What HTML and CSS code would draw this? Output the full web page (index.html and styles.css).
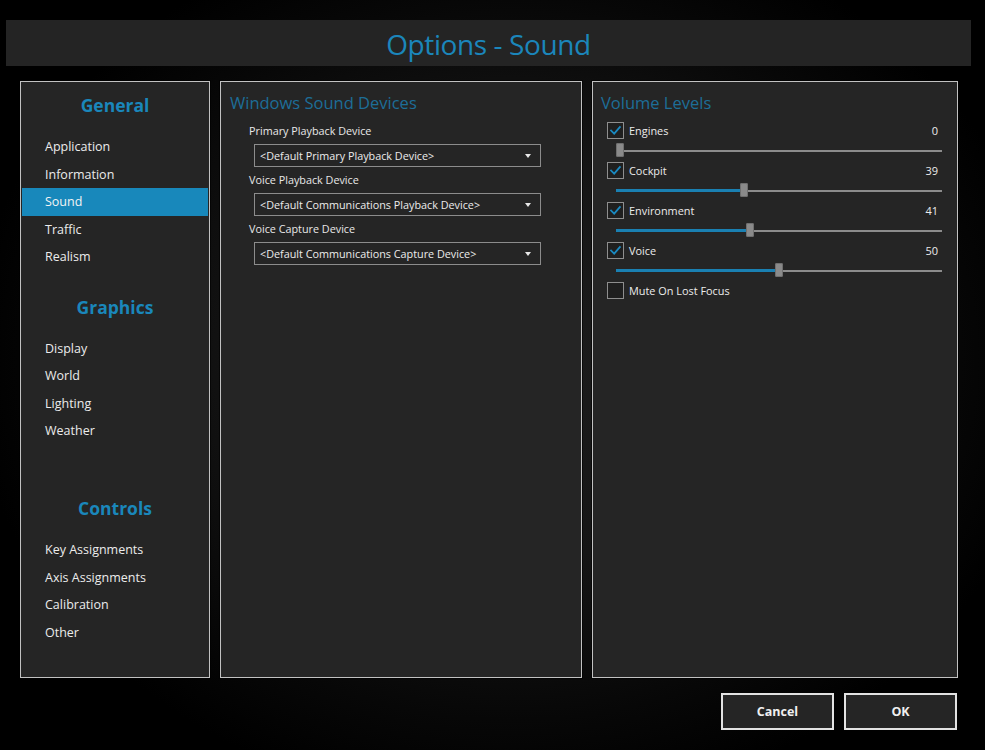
FILE: index.html
```html
<!DOCTYPE html>
<html lang="en">
<head>
<meta charset="utf-8">
<title>Options - Sound</title>
<link rel="stylesheet" href="styles.css">
</head>
<body>
<header class="title-bar"><h1>Options - Sound</h1></header>
<main class="panels">
  <nav class="panel nav-panel">
    <section class="nav-section">
      <h2>General</h2>
      <ul>
        <li>Application</li>
        <li>Information</li>
        <li class="active">Sound</li>
        <li>Traffic</li>
        <li>Realism</li>
      </ul>
    </section>
    <section class="nav-section">
      <h2>Graphics</h2>
      <ul>
        <li>Display</li>
        <li>World</li>
        <li>Lighting</li>
        <li>Weather</li>
      </ul>
    </section>
    <section class="nav-section controls">
      <h2>Controls</h2>
      <ul>
        <li>Key Assignments</li>
        <li>Axis Assignments</li>
        <li>Calibration</li>
        <li>Other</li>
      </ul>
    </section>
  </nav>

  <section class="panel devices-panel">
    <h3 class="panel-title">Windows Sound Devices</h3>
    <div class="field">
      <div class="field-label">Primary Playback Device</div>
      <div class="select"><span>&lt;Default Primary Playback Device&gt;</span><i class="arrow"></i></div>
    </div>
    <div class="field">
      <div class="field-label">Voice Playback Device</div>
      <div class="select"><span>&lt;Default Communications Playback Device&gt;</span><i class="arrow"></i></div>
    </div>
    <div class="field">
      <div class="field-label">Voice Capture Device</div>
      <div class="select"><span>&lt;Default Communications Capture Device&gt;</span><i class="arrow"></i></div>
    </div>
  </section>

  <section class="panel volume-panel">
    <h3 class="panel-title">Volume Levels</h3>
    <div class="levels">
      <div class="level">
        <div class="check-row">
          <span class="checkbox checked"><svg viewBox="0 0 17 17"><path d="M3.5 8.5 L7 12 L13.5 4.5"/></svg></span>
          <span class="check-label">Engines</span>
          <span class="value">0</span>
        </div>
        <div class="slider">
          <div class="fill" style="width:0px"></div><div class="rest"></div>
          <div class="thumb" style="left:0px"></div>
        </div>
      </div>
      <div class="level">
        <div class="check-row">
          <span class="checkbox checked"><svg viewBox="0 0 17 17"><path d="M3.5 8.5 L7 12 L13.5 4.5"/></svg></span>
          <span class="check-label">Cockpit</span>
          <span class="value">39</span>
        </div>
        <div class="slider">
          <div class="fill" style="width:128px"></div><div class="rest"></div>
          <div class="thumb" style="left:124px"></div>
        </div>
      </div>
      <div class="level">
        <div class="check-row">
          <span class="checkbox checked"><svg viewBox="0 0 17 17"><path d="M3.5 8.5 L7 12 L13.5 4.5"/></svg></span>
          <span class="check-label">Environment</span>
          <span class="value">41</span>
        </div>
        <div class="slider">
          <div class="fill" style="width:134px"></div><div class="rest"></div>
          <div class="thumb" style="left:130px"></div>
        </div>
      </div>
      <div class="level">
        <div class="check-row">
          <span class="checkbox checked"><svg viewBox="0 0 17 17"><path d="M3.5 8.5 L7 12 L13.5 4.5"/></svg></span>
          <span class="check-label">Voice</span>
          <span class="value">50</span>
        </div>
        <div class="slider">
          <div class="fill" style="width:163px"></div><div class="rest"></div>
          <div class="thumb" style="left:159px"></div>
        </div>
      </div>
      <div class="check-row">
        <span class="checkbox"></span>
        <span class="check-label">Mute On Lost Focus</span>
      </div>
    </div>
  </section>
</main>
<footer class="actions">
  <button class="btn">Cancel</button>
  <button class="btn">OK</button>
</footer>
</body>
</html>
```

FILE: styles.css
```css
html, body {
  margin: 0;
  padding: 0;
}

body {
  width: 985px;
  height: 750px;
  overflow: hidden;
  background:
    radial-gradient(ellipse 55% 60% at 52% 48%, #1d1d1d 0%, #151515 45%, #070707 80%, #000 100%);
  font-family: "Open Sans", "Noto Sans", sans-serif;
  color: #e6e6e6;
}

.title-bar {
  margin: 20px 14px 0 6px;
  height: 46px;
  background: #242424;
  display: flex;
  align-items: center;
  justify-content: center;
}

.title-bar h1 {
  margin: 0;
  font-weight: 400;
  font-size: 28px;
  letter-spacing: -0.4px;
  line-height: 46px;
  padding-top: 2px;
  color: #1b86bb;
}

.panels {
  display: flex;
  gap: 10px;
  margin: 15px 0 0 20px;
  height: 597px;
}

.panel {
  box-sizing: border-box;
  border: 1px solid #c2c2c2;
  background: #252525;
  box-shadow: 0 0 0 1px rgba(0,0,0,0.6);
}

/* navigation */
.nav-panel {
  width: 190px;
  padding: 1px;
}

.nav-section + .nav-section {
  margin-top: 14px;
}

.nav-section.controls {
  margin-top: 41.5px;
}

.nav-section h2 {
  margin: 0;
  box-sizing: border-box;
  height: 50px;
  padding-top: 11px;
  line-height: 22px;
  font-size: 17.5px;
  font-weight: 700;
  text-align: center;
  color: #1a87bb;
}

.nav-section ul {
  list-style: none;
  margin: 0;
  padding: 0;
}

.nav-section li {
  height: 27.5px;
  line-height: 27.5px;
  padding-left: 23px;
  font-size: 12.5px;
  color: #ececec;
}

.nav-section li.active {
  background: #1888bb;
  color: #f4f4f4;
}

/* devices */
.devices-panel {
  width: 362px;
  padding: 10px 0 0 9px;
}

.panel-title {
  margin: 0 0 9px;
  line-height: 22px;
  font-size: 16.5px;
  font-weight: 400;
  color: #1d6e98;
}

.field {
  padding-left: 19px;
  margin-bottom: 5px;
}

.field-label {
  line-height: 16px;
  font-size: 10.8px;
  color: #e8e8e8;
  margin-bottom: 5px;
}

.select {
  box-sizing: border-box;
  margin-left: 5px;
  width: 287px;
  height: 23px;
  border: 1px solid #8c8c8c;
  display: flex;
  align-items: center;
  padding: 0 9px 0 5px;
  font-size: 10.8px;
  color: #ececec;
}

.select span {
  flex: 1;
}

.arrow {
  width: 0;
  height: 0;
  border-left: 3px solid transparent;
  border-right: 3px solid transparent;
  border-top: 4px solid #e8e8e8;
}

/* volume */
.volume-panel {
  width: 366px;
  padding: 10px 0 0 0;
}

.volume-panel .panel-title {
  padding-left: 8px;
  margin-bottom: 8px;
}

.levels {
  padding: 0 19px 0 14px;
}

.check-row {
  display: flex;
  align-items: center;
  height: 17px;
}

.checkbox {
  box-sizing: border-box;
  width: 17px;
  height: 17px;
  border: 1px solid #8e8e8e;
  background: #1f1f1f;
  display: inline-flex;
}

.checkbox svg {
  width: 15px;
  height: 15px;
  fill: none;
  stroke: #1a8ac2;
  stroke-width: 2;
  stroke-linecap: square;
}

.check-label {
  margin-left: 5px;
  font-size: 10.9px;
  color: #ececec;
}

.value {
  margin-left: auto;
  font-size: 11px;
  color: #ececec;
}

.slider {
  position: relative;
  height: 23px;
  margin: 0 -4px 0 9px;
  display: flex;
  align-items: center;
}

.fill {
  height: 3px;
  background: #1a80b2;
}

.rest {
  flex: 1;
  height: 2px;
  background: #8c8c8c;
}

.thumb {
  position: absolute;
  top: 4px;
  width: 8px;
  height: 14px;
  border-radius: 2px;
  background: #8a8a8a;
  box-shadow: inset 0 0 0 1px #6f6f6f;
}

/* footer */
.actions {
  display: flex;
  justify-content: flex-end;
  gap: 10px;
  margin-top: 15px;
  padding-right: 28px;
}

.btn {
  box-sizing: border-box;
  width: 113px;
  height: 37px;
  border: 2px solid #e2e2e2;
  background: #252525;
  color: #f0f0f0;
  font-family: "Open Sans", "Noto Sans", sans-serif;
  font-size: 12.5px;
  font-weight: 700;
  padding: 0;
}
```
